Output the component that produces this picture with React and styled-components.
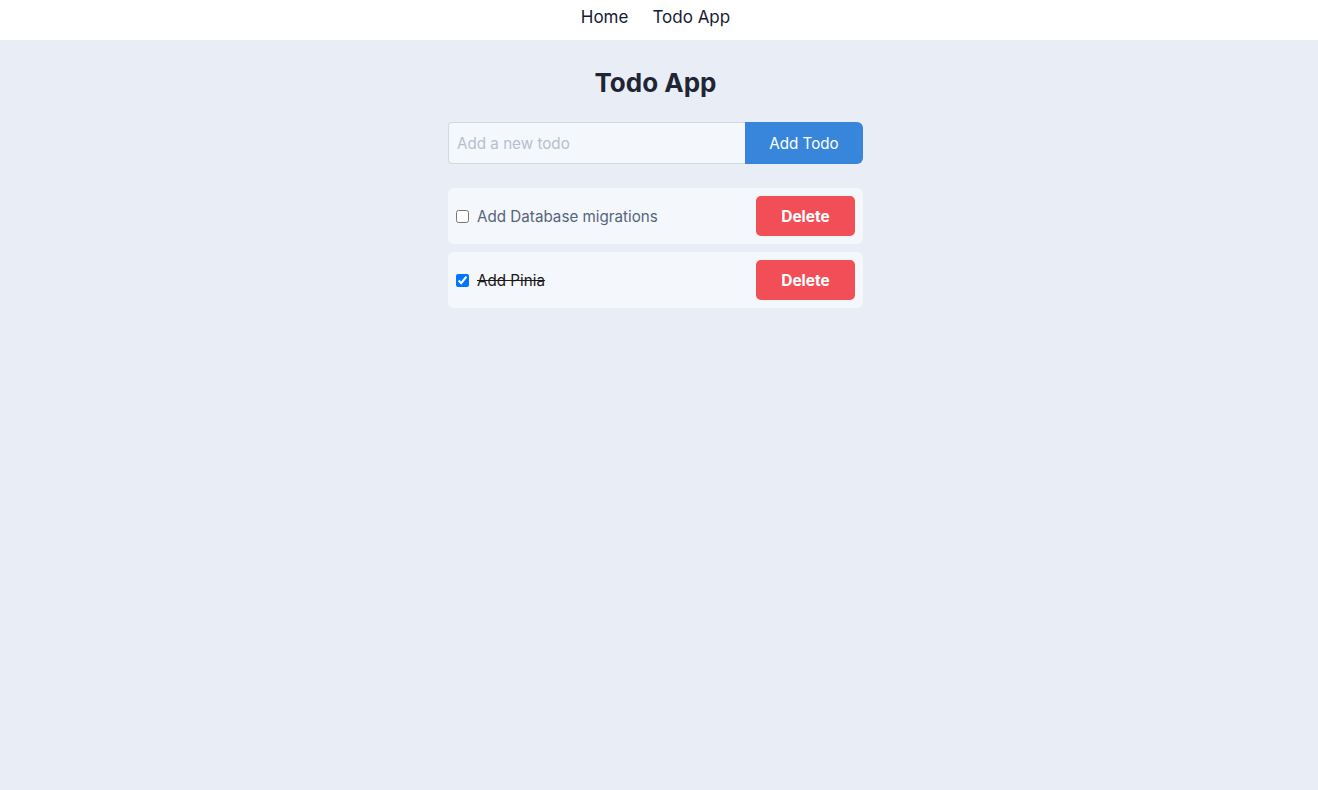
import { createGlobalStyle, styled } from "styled-components";

const GlobalStyle = createGlobalStyle`
  html, body {
    margin: 0;
    padding: 0;
    background-color: #e9eef6;
    font-family: Inter, "Noto Sans", "Liberation Sans", sans-serif;
  }
  body {
    padding-right: 7px;
  }
  #root {
    min-height: 100vh;
  }
`;

const todos = [
  { id: 1, text: "Add Database migrations", done: false },
  { id: 2, text: "Add Pinia", done: true },
];

const App = () => {
  return (
    <>
      <GlobalStyle />
      <Nav>
        <a href="#">Home</a>
        <a href="#">Todo App</a>
      </Nav>
      <Main>
        <Title>Todo App</Title>
        <Form onSubmit={(e) => e.preventDefault()}>
          <Input placeholder="Add a new todo" />
          <AddButton type="submit">Add Todo</AddButton>
        </Form>
        <List>
          {todos.map((todo) => (
            <Item key={todo.id}>
              <Label $done={todo.done}>
                <input type="checkbox" defaultChecked={todo.done} />
                <span>{todo.text}</span>
              </Label>
              <DeleteButton>Delete</DeleteButton>
            </Item>
          ))}
        </List>
      </Main>
    </>
  );
};

const Nav = styled.nav`
  height: 40px;
  background-color: #ffffff;
  margin-right: -7px;
  padding-right: 7px;
  display: flex;
  justify-content: center;
  align-items: center;
  gap: 24px;
  padding-bottom: 6px;
  box-sizing: border-box;

  a {
    color: #171a33;
    text-decoration: none;
    font-size: 17px;
  }
`;

const Main = styled.main`
  width: 415px;
  margin: 0 auto;
  padding-top: 26px;
`;

const Title = styled.h1`
  margin: 0 0 22px;
  text-align: center;
  font-size: 26px;
  font-weight: 700;
  line-height: 34px;
  color: #1f2535;
`;

const Form = styled.form`
  display: flex;
  height: 42px;
  margin-bottom: 24px;
`;

const Input = styled.input`
  flex: 1;
  min-width: 0;
  box-sizing: border-box;
  border: 1px solid #d3d8df;
  border-right: none;
  border-radius: 4px 0 0 4px;
  background-color: #f4f7fb;
  padding: 0 8px;
  font-family: inherit;
  font-size: 15.2px;
  color: #2d3748;
  outline: none;

  &::placeholder {
    color: #b4bfcd;
  }
`;

const AddButton = styled.button`
  width: 118px;
  border: none;
  border-radius: 0 6px 6px 0;
  background-color: #3786dc;
  color: #ffffff;
  font-family: inherit;
  font-size: 15.2px;
  cursor: pointer;
`;

const List = styled.ul`
  list-style: none;
  margin: 0;
  padding: 0;
  display: flex;
  flex-direction: column;
  gap: 8px;
`;

const Item = styled.li`
  display: flex;
  align-items: center;
  justify-content: space-between;
  height: 56px;
  box-sizing: border-box;
  padding: 8px;
  background-color: #f4f7fb;
  border-radius: 6px;
`;

const Label = styled.label`
  display: flex;
  align-items: center;
  gap: 8px;
  font-size: 15.2px;

  input {
    margin: 0;
    width: 13px;
    height: 13px;
  }

  span {
    color: ${(p) => (p.$done ? "#1a1a1a" : "#56657c")};
    text-decoration: ${(p) => (p.$done ? "line-through" : "none")};
  }
`;

const DeleteButton = styled.button`
  width: 99px;
  height: 40px;
  border: none;
  border-radius: 5px;
  background-color: #f14e58;
  color: #ffffff;
  font-family: inherit;
  font-size: 15.5px;
  font-weight: 700;
  cursor: pointer;
`;

export default App;
